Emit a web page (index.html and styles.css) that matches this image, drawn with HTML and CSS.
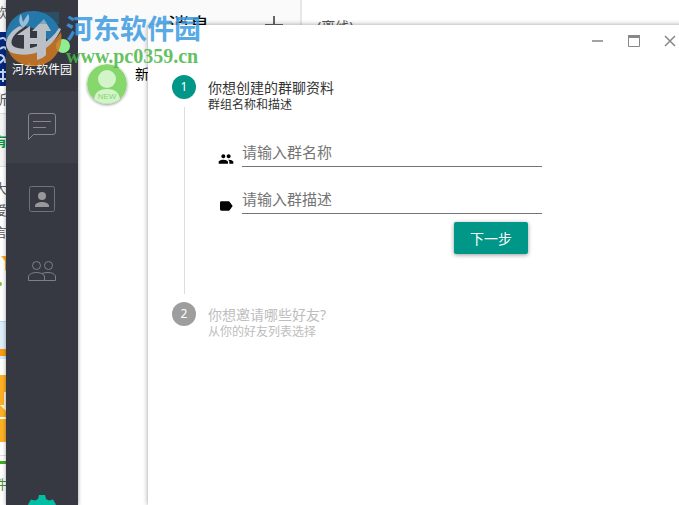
FILE: index.html
```html
<!doctype html>
<html lang="zh-CN">
<head>
  <meta charset="utf-8">
  <title>创建群聊</title>
  <link rel="stylesheet" href="styles.css">
</head>

<body>

  <div class="desktop">

    <!-- page that shows behind the window -->
    <div class="behind">
      <div class="behind-top">软</div>
      <div class="behind-logo">
        <svg width="6" height="54" viewBox="0 0 6 54">
          <path d="M0 7c3-2 5-1 6 2M0 17c3-3 6-2 6 1M0 23c3 0 5 3 5 8M0 31l4-4M0 40h6M0 47h6M3 37v13" fill="none" stroke="#c5d7ef" stroke-width="2"/>
        </svg>
      </div>
      <div class="behind-place">所</div>
      <div class="behind-head">有</div>
      <div class="behind-text">
        <div>大</div>
        <div>爱</div>
        <div>言</div>
      </div>
      <div class="behind-star">
        <svg width="6" height="76" viewBox="0 0 6 76">
          <path d="M1 13h5v15l-1-1v-9z" fill="#fdb024"/>
          <circle cx="0" cy="41" r="2" fill="#7ac23c"/>
        </svg>
      </div>
      <div class="behind-blue"></div>
      <div class="behind-download">
        <svg width="6" height="42" viewBox="0 0 6 42">
          <path d="M6 17H4v13H0l6 6z" fill="#fff3dc"/>
        </svg>
      </div>
      <div class="behind-download small"></div>
      <div class="behind-line"></div>
      <div class="behind-foot">件</div>
    </div>

    <nav class="sidebar">
      <div class="user">河东软件园<span class="online"></span></div>
      <button class="nav-btn active" aria-label="消息">
        <svg width="28" height="28" viewBox="0 0 28 28" fill="none" stroke="#85878c">
          <path d="M.5 26.500V3a2.500 2.500 0 0 1 2.500-2.500h22a2.500 2.500 0 0 1 2.500 2.500v16a2.500 2.500 0 0 1-2.500 2.500H5.500zM5 8.500h18M5 14.500h13"/>
        </svg>
      </button>
      <button class="nav-btn" aria-label="联系人">
        <svg width="28" height="28" viewBox="0 0 28 28">
          <rect x="1.500" y="1.500" width="25" height="25" rx="2" fill="none" stroke="#70737a"/>
          <circle cx="14" cy="11" r="4" fill="#96989c"/>
          <path d="M7 22v-1c0-3 4-4 7-4s7 1 7 4v1z" fill="#96989c"/>
        </svg>
      </button>
      <button class="nav-btn" aria-label="群聊">
        <svg width="28" height="28" viewBox="0 0 28 28" fill="none" stroke="#7d8087">
          <circle cx="8.500" cy="8.500" r="4"/>
          <circle cx="20.500" cy="8.500" r="4"/>
          <path d="M.5 23.500V19c1-2 4-3.500 8-3.500s7 1.500 8 3.500v4.500zM14 16.500c2-.7 4-1 6-1 4 0 6.500 1.500 7.500 3.500v4.500h-11"/>
        </svg>
      </button>
      <button class="settings" aria-label="设置">
        <svg width="28" height="28" viewBox="0 0 28 28" fill="#00bfa5">
          <path d="M11 0h6l1 4 3 1.500 4-1 3 5-3 3v3l3 3-3 5-4-1-3 1.500-1 4h-6l-1-4-3-1.500-4 1-3-5 3-3v-3l-3-3 3-5 4 1L10 4z"/>
        </svg>
      </button>
    </nav>

    <section class="messages">
      <header class="messages-head">
        <h1>消息</h1>
        <button class="add" aria-label="添加">
          <svg width="18" height="18" viewBox="0 0 18 18" stroke="#666" stroke-width="2">
            <path d="M9 0v18M0 9h18"/>
          </svg>
        </button>
      </header>
      <div class="friend">
        <svg class="avatar" width="40" height="40" viewBox="0 0 40 40">
          <circle cx="20" cy="20" r="20" fill="#86d76c"/>
          <circle cx="20" cy="15" r="9" fill="#d3f3c8"/>
          <path d="M7 35c1-7 6-10 13-10s12 3 13 10a20 20 0 0 1-26 0z" fill="#d3f3c8"/>
          <text x="20" y="35" class="avatar-text">NEW</text>
        </svg>
        <span class="friend-name">新的朋友</span>
      </div>
    </section>

    <main class="chat">(离线)</main>
  </div>

  <div class="dialog" role="dialog">
    <div class="window-bar">
      <button aria-label="最小化">
        <svg width="12" height="12" viewBox="0 0 12 12"><path d="M0 5h11v2H0z" fill="#a3a3a3"/></svg>
      </button>
      <button aria-label="最大化">
        <svg width="12" height="12" viewBox="0 0 12 12"><path d="M.5 1v10.500h11V1" fill="none" stroke="#888"/><path d="M0 0h12v3H0z" fill="#888"/></svg>
      </button>
      <button aria-label="关闭">
        <svg width="12" height="12" viewBox="0 0 12 12"><path d="M1 1l10 10M11 1L1 11" stroke="#888" stroke-width="1.500"/></svg>
      </button>
    </div>

    <form class="stepper">
      <div class="step">
        <span class="num">1</span>
        <div class="step-title">
          <h2>你想创建的群聊资料</h2>
          <p>群组名称和描述</p>
        </div>
      </div>

      <div class="step-content">
        <div class="field">
          <label for="groupName" aria-label="群名称">
            <svg width="16" height="16" viewBox="0 0 24 24">
              <path d="M16 11c1.660 0 2.990-1.340 2.990-3S17.660 5 16 5s-3 1.340-3 3 1.340 3 3 3zm-8 0c1.660 0 2.990-1.340 2.990-3S9.660 5 8 5 5 6.340 5 8s1.340 3 3 3zm0 2c-2.330 0-7 1.170-7 3.500V19h14v-2.500c0-2.330-4.670-3.500-7-3.500zm8 0c-.29 0-.62.02-.97.05 1.160.84 1.970 1.970 1.970 3.450V19h6v-2.500c0-2.330-4.670-3.500-7-3.500z"/>
            </svg>
          </label>
          <input type="text" id="groupName" placeholder="请输入群名称">
        </div>
        <div class="field">
          <label for="groupDesc" aria-label="群描述">
            <svg width="16" height="16" viewBox="0 0 24 24">
              <path d="M17.630 5.840C17.270 5.330 16.670 5 16 5L5 5.010C3.900 5.010 3 5.900 3 7v10c0 1.100.9 1.990 2 1.990L16 19c.67 0 1.270-.33 1.630-.84L22 12l-4.370-6.160z"/>
            </svg>
          </label>
          <input type="text" id="groupDesc" placeholder="请输入群描述">
        </div>
        <button type="button" class="next">下一步</button>
      </div>

      <div class="step waiting">
        <span class="num">2</span>
        <div class="step-title">
          <h2>你想邀请哪些好友?</h2>
          <p>从你的好友列表选择</p>
        </div>
      </div>
    </form>
  </div>

  <!-- site mark over everything -->
  <div class="mark">
    <svg width="58" height="60" viewBox="0 0 58 60">
      <path d="M1 32C0 16 11 3 28 3c13 0 23 8 27 19L44 33 31 21 20 18 9 26 3 36z" fill="#2483bd"/>
      <path d="M3 42c14 8 38 5 53-18 3 17-8 34-27 34C16 58 7 52 3 42z" fill="#d17a22"/>
      <path d="M1 35c1-7 7-14 14-17l3 2C8 26 4 34 8 38c9 6 33 3 46-18l2 1C47 42 28 49 12 46 4 45 1 41 1 35z" fill="#d3d8de"/>
      <path d="M12 27l13-9v25l-6 1V27z" fill="#d3d8de"/>
      <path d="M25 30h7v-7h-5l12-12 7 12h-5v24c-3 3-6 4-9 5V36h-7z" fill="#d3d8de"/>
      <path d="M16 6l2 8 5-8c3 5 0 10-5 14-4-4-5-9-2-14z" fill="#a8d6ef"/>
      <path d="M29 4h25v12H29z" fill="#1685bd" opacity=".35"/>
    </svg>
    <div class="mark-text">
      <div class="mark-name">河东软件园</div>
      <div class="mark-url">www.pc0359.cn</div>
    </div>
  </div>

</body>
</html>
```

FILE: styles.css
```css
*{
  box-sizing: border-box;
}
body{
  margin: 0;
  height: 100vh;
  overflow: hidden;
  position: relative;
  background: #fff;
  color: #000;
  font-family: "Noto Sans", "Noto Sans CJK SC", sans-serif;
  font-size: 14px;
}
h1, h2, p{
  margin: 0;
  font-weight: normal;
}
button{
  border: 0;
  padding: 0;
  background: none;
  cursor: pointer;
  font-family: inherit;
}
svg{
  display: block;
}
.desktop{
  display: flex;
  height: 100%;
}

/* page behind */
.behind{
  width: 6px;
  flex: none;
  overflow: hidden;
  color: #555;
  font-size: 13px;
  background: #fff;
}
.behind div{
  text-indent: -6px;
  white-space: nowrap;
}
.behind-top{
  height: 32px;
  line-height: 24px;
  background: #f8f8f8;
}
.behind-logo{
  height: 54px;
  background: #06287c;
}
.behind-place{
  height: 27px;
  line-height: 26px;
}
.behind-head{
  height: 54px;
  line-height: 54px;
  background: #f5f5f5;
  border-top: 1px solid #ddd;
  border-bottom: 1px solid #ddd;
  color: #00963c;
  font-weight: bold;
}
.behind-text{
  padding-top: 10px;
  line-height: 22px;
}
.behind-star{
  height: 78px;
}
.behind-blue{
  height: 38px;
  margin-bottom: 16px;
  background: linear-gradient(#ddeef8 27px, #f79c12 27px, #f79c12 34px, #d3eafa 34px);
  border-top: 1px solid #b5dcee;
}
.behind-download{
  height: 42px;
  background: #fdb024;
}
.behind-download.small{
  height: 23px;
  margin-top: 2px;
}
.behind-line{
  height: 24px;
  margin-top: 13px;
  border-top: 1px solid #ddd;
  background: linear-gradient(#fff 5px, #3fae1d 5px, #3fae1d 8px, #fff 8px);
}
.behind-foot{
  line-height: 10px;
  color: #4c8a3a;
}

/* sidebar */
.sidebar{
  width: 72px;
  flex: none;
  display: flex;
  flex-direction: column;
  align-items: center;
  background: #363941;
  box-shadow: 0 0 4px rgba(0,0,0,.4);
}
.user{
  position: relative;
  height: 91px;
  padding-top: 60px;
  flex: none;
  color: #fff;
  font-size: 12px;
  line-height: 20px;
  white-space: nowrap;
}
.online{
  position: absolute;
  top: 39px;
  right: 2px;
  width: 14px;
  height: 14px;
  border-radius: 50%;
  background: #90ee90;
}
.nav-btn{
  width: 100%;
  height: 72px;
  flex: none;
  display: flex;
  align-items: center;
  justify-content: center;
}
.nav-btn.active{
  background: #3d4048;
}
.settings{
  height: 10px;
  margin-top: auto;
  overflow: hidden;
  display: flex;
  align-items: flex-start;
}

/* message list */
.messages{
  width: 224px;
  flex: none;
  border-right: 2px solid #e7e7e7;
}
.messages-head{
  height: 54px;
  padding: 0 17px 4px 90px;
  display: flex;
  align-items: center;
  justify-content: space-between;
  background: #fafafa;
}
.messages-head h1{
  font-size: 21px;
  line-height: 30px;
}
.friend{
  display: flex;
  gap: 8px;
  padding: 10px 9px;
  overflow: hidden;
}
.avatar{
  flex: none;
  border-radius: 50%;
  box-shadow: 0 1px 3px rgba(0,0,0,.4);
}
.avatar-text{
  fill: #86d76c;
  font-family: "Liberation Sans", sans-serif;
  font-size: 8px;
  text-anchor: middle;
}
.friend-name{
  line-height: 20px;
  white-space: nowrap;
}
.chat{
  padding: 17px 15px;
  line-height: 20px;
  color: #555;
}

/* create group window */
.dialog{
  position: absolute;
  top: 25px;
  left: 148px;
  right: -9px;
  bottom: 0;
  background: #fff;
  box-shadow: 0 0 5px rgba(0,0,0,.4);
}
.window-bar{
  display: flex;
  justify-content: flex-end;
}
.window-bar button{
  width: 36px;
  height: 32px;
  display: flex;
  align-items: center;
  justify-content: center;
}
.stepper{
  padding: 18px 24px;
}
.step{
  display: flex;
  gap: 12px;
}
.num{
  width: 24px;
  height: 24px;
  border-radius: 50%;
  background: #009688;
  color: #fff;
  font-size: 12px;
  line-height: 24px;
  text-align: center;
}
.step-title{
  padding-top: 4px;
  height: 32px;
  color: #333;
}
.step-title h2{
  font-size: 14px;
  line-height: 18px;
}
.step-title p{
  font-size: 12px;
  line-height: 16px;
}
.waiting .num{
  background: #9e9e9e;
}
.waiting .step-title{
  color: #bdbdbd;
}
.step-content{
  width: 358px;
  max-width: 100%;
  height: 187px;
  margin: 0 0 8px 12px;
  padding: 30px 0 0 33px;
  border-left: 1px solid #ddd;
  display: flex;
  flex-direction: column;
  gap: 17px;
}
.field{
  display: flex;
  align-items: flex-end;
  gap: 8px;
}
.field input{
  flex: 1;
  min-width: 0;
  height: 30px;
  padding: 0;
  border: 0;
  border-bottom: 1px solid #757575;
  outline: none;
  background: none;
  font-family: inherit;
  font-size: 15px;
}
.field input::placeholder{
  color: #757575;
}
.next{
  width: 74px;
  height: 32px;
  margin: -9px 14px 0 0;
  flex: none;
  align-self: flex-end;
  border-radius: 2px;
  background: #009688;
  color: #fff;
  font-size: 14px;
  box-shadow: 0 1px 4px rgba(0,0,0,.4);
}

/* site mark */
.mark{
  position: absolute;
  top: 8px;
  left: 5px;
  display: flex;
  gap: 3px;
  opacity: .85;
  pointer-events: none;
}
.mark-text{
  padding-top: 4px;
}
.mark-name{
  color: #3b9ce2;
  font-family: "Noto Sans CJK SC", sans-serif;
  font-size: 27px;
  font-weight: bold;
  line-height: 32px;
}
.mark-url{
  color: #4cb748;
  font-family: "Liberation Serif", serif;
  font-size: 20px;
  font-weight: bold;
  line-height: 24px;
}
```
